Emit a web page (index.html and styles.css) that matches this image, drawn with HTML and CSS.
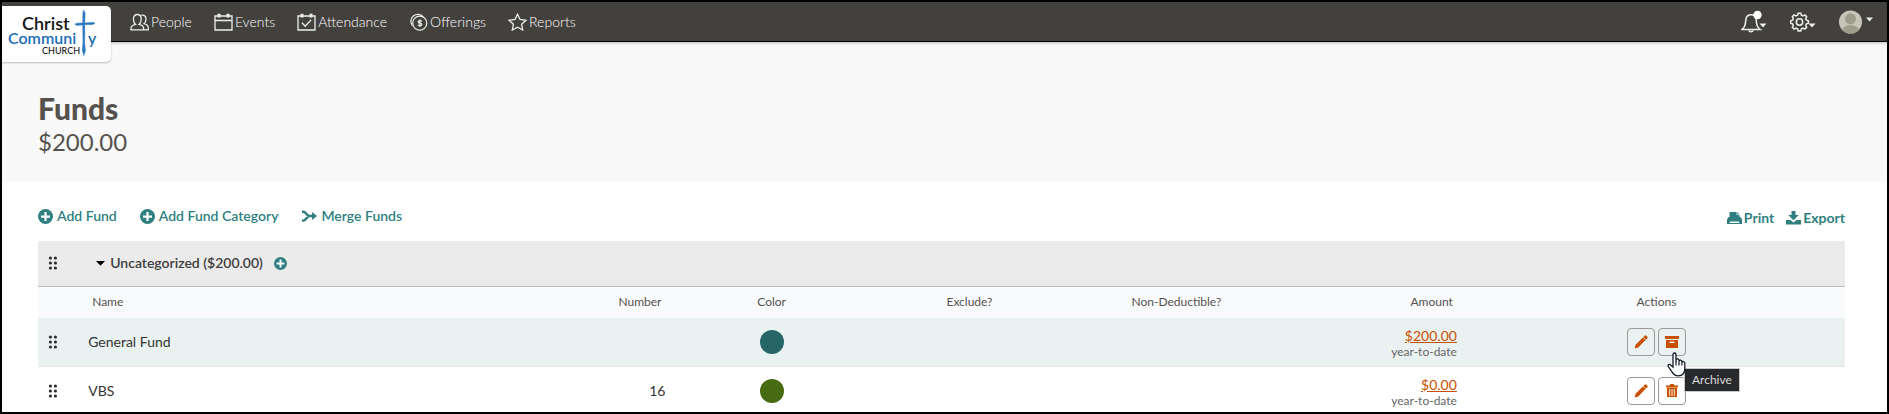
FILE: index.html
```html
<!DOCTYPE html>
<html lang="en">
<head>
<meta charset="utf-8">
<title>Funds</title>
<link rel="stylesheet" href="styles.css">
</head>
<body>
<svg class="sprite" aria-hidden="true">
  <symbol id="plus" viewBox="0 0 16 16"><circle cx="8" cy="8" r="8" fill="currentColor"/><path d="M8 3.200v9.600M3.200 8h9.600" stroke="#fff" stroke-width="2.400"/></symbol>
  <symbol id="grip" viewBox="0 0 10 14"><g fill="currentColor"><circle cx="2.4" cy="2" r="1.6"/><circle cx="7.4" cy="2" r="1.6"/><circle cx="2.4" cy="7" r="1.6"/><circle cx="7.4" cy="7" r="1.6"/><circle cx="2.4" cy="12" r="1.6"/><circle cx="7.4" cy="12" r="1.6"/></g></symbol>
  <symbol id="pencil" viewBox="0 0 14 14"><path fill="currentColor" d="M.6 13.400l1-3.600L8.900 2.500l2.600 2.600-7.300 7.300zM9.300 2.100l1.300-1.300a1.300 1.300 0 0 1 1.800 0l.8.8a1.300 1.300 0 0 1 0 1.800l-1.300 1.300z"/></symbol>
</svg>

<header class="navbar">
  <a class="logo" href="#" aria-label="Christ Community Church">
    <svg width="109" height="56" viewBox="0 0 109 56">
      <text x="20" y="24" class="logo-dark">Christ</text>
      <text x="6" y="38" class="logo-blue">Communi</text>
      <text x="86" y="38" class="logo-blue">y</text>
      <text x="40" y="48" class="logo-small">CHURCH</text>
      <path d="M81.500 4l1.600 3-.4 10 8.300-.6 2 .8-2.200 1.200-8 .2-.2 18 .8 8-1.600 5-1.400-5 .6-8-.2-17.600-5.900.3-2.100-1.100 2.300-1 5.700-.1.100-9.500z" fill="#2a78bd" stroke="#2a78bd" stroke-width=".6"/>
    </svg>
  </a>
  <nav class="menu">
    <a href="#"><svg class="nav-icon" viewBox="0 0 19 18"><path d="M1 16.800v-1.300c0-2.300 2.100-3.500 4.600-4.100C4.200 10.300 3.400 8.400 3.400 6.200 3.400 3.200 5 1.500 7.300 1.500s3.900 1.700 3.900 4.700c0 2.200-.8 4.100-2.200 5.200 2.500.6 4.600 1.800 4.600 4.100v1.300zM11.300 2.400c2.600-.9 4.700.7 4.700 3.800 0 1.900-.8 3.600-2 4.500 2.400.6 4.200 1.900 4.200 4v2.100h-4.600"/></svg>People</a>
    <a href="#"><svg class="nav-icon" viewBox="0 0 19 18"><path d="M1 3h17v14H1zM1 7.500h17"/><path d="M5 .8v3.700M14 .8v3.700" stroke-width="3"/></svg>Events</a>
    <a href="#"><svg class="nav-icon" viewBox="0 0 19 18"><path d="M1 3h17v14H1zM5 9.800l3.200 3.400 6-6.400"/><path d="M5 .8v3.700M14 .8v3.700" stroke-width="3"/></svg>Attendance</a>
    <a href="#"><svg class="nav-icon" viewBox="0 0 19 19"><path d="M3 13.200A7.200 7.200 0 1 1 14.600 4.200"/><circle cx="10.800" cy="10.700" r="7.400"/><path d="M13 8.900c-.6-1.100-3.900-1.200-3.900.5 0 1.900 3.900.8 3.900 2.700 0 1.700-3.300 1.600-4.100.3M11 6.800v8"/></svg>Offerings</a>
    <a href="#"><svg class="nav-icon" viewBox="0 0 19 18"><path d="M9.500 1.200l2.500 5.300 6 .8-4.400 4 1.100 5.700-5.200-2.800L4.300 17l1.100-5.700L1 7.300l6-.8z"/></svg>Reports</a>
  </nav>
  <div class="account">
    <button type="button" aria-label="Notifications"><svg width="26" height="24" viewBox="0 0 26 24"><g class="line"><path d="M.8 19.500c3.400-2.500 3.600-5 4-9.500.3-3.500 2.500-5.300 5.200-5.300s4.900 1.800 5.200 5.300c.4 4.500.6 7 4 9.500z"/><path d="M7.800 20.500c.5 1.500 3.900 1.500 4.400 0"/></g><path d="M18.500 13.500h7l-3.500 4z" fill="#eee"/><circle cx="16.500" cy="5" r="4.200" fill="#fff"/></svg></button>
    <button type="button" aria-label="Settings"><svg width="26" height="24" viewBox="0 0 26 24"><g class="line"><circle cx="9.500" cy="12" r="3.200"/><path d="M8.200 3.200h2.600l.6 2 1.600.7 1.900-1 1.800 1.800-1 1.900.7 1.600 2 .6v2.500l-2 .6-.7 1.600 1 1.900-1.800 1.800-1.900-1-1.600.7-.6 2H8.200l-.6-2-1.600-.7-1.900 1-1.800-1.800 1-1.900-.7-1.600-2-.6v-2.500l2-.6.7-1.600-1-1.900 1.800-1.800 1.900 1 1.600-.7z"/></g><path d="M18.500 13.500h7l-3.500 4z" fill="#eee"/></svg></button>
    <button type="button" aria-label="Account"><svg width="34" height="24" viewBox="0 0 34 24"><defs><clipPath id="face"><circle cx="11.500" cy="12" r="11.500"/></clipPath></defs><g clip-path="url(#face)"><path d="M0 0h23v24H0z" fill="#c5c6b7"/><circle cx="11.500" cy="8.800" r="5.500" fill="#9c9e8b"/><path d="M2 24c0-12 19-12 19 0z" fill="#9c9e8b"/></g><path d="M27 7.500h7l-3.500 4z" fill="#eee"/></svg></button>
  </div>
</header>

<main>
  <section class="heading">
    <h1>Funds</h1>
    <p>$200.00</p>
  </section>

  <section class="content">
    <div class="toolbar">
      <div class="tools">
        <a href="#"><svg width="15" height="15"><use href="#plus"/></svg>Add Fund</a>
        <a href="#"><svg width="15" height="15"><use href="#plus"/></svg>Add Fund Category</a>
        <a href="#"><svg width="16" height="15" viewBox="0 0 16 15"><path d="M1 2.800h1.500c2.500 0 3 4.200 6 4.200h4M1 11.600h1.500c2.500 0 3-4.600 6-4.600" fill="none" stroke="currentColor" stroke-width="2.400"/><path d="M11 3l5 4-5 4z" fill="currentColor"/></svg>Merge Funds</a>
      </div>
      <div class="tools outputs">
        <a href="#"><svg width="15" height="14" viewBox="0 0 15 14"><path d="M2.500 1h7.500l2.500 2.500V7H2.500zM1.500 6h12L15 8.500V13H0V8.500z" fill="currentColor"/><path d="M3.200 10.500h8.600l.7 1.500H2.500z" fill="#fff"/><path d="M9.800 1v2.700h2.700" fill="none" stroke="#fff" stroke-width=".7"/></svg>Print</a>
        <a href="#"><svg width="15" height="14" viewBox="0 0 15 14"><path d="M5.500 0h4v4h3.300L7.500 9.300 2.200 4h3.300zM0 9h4.500l3 2.500 3-2.500H15v4.500H0z" fill="currentColor"/></svg>Export</a>
      </div>
    </div>

    <table class="funds">
      <colgroup><col class="c-grip"><col class="c-name"><col class="c-number"><col class="c-color"><col class="c-exclude"><col class="c-deduct"><col class="c-amount"><col class="c-actions"></colgroup>
      <tbody>
        <tr class="category">
          <td class="grip"><svg width="10" height="14"><use href="#grip"/></svg></td>
          <td colspan="7"><div class="category-title"><button type="button" class="plain"><svg width="9" height="5" viewBox="0 0 9 5"><path d="M0 0h9L4.500 4.800z" fill="#000"/></svg>Uncategorized ($200.00)</button><a href="#" aria-label="Add fund"><svg width="13" height="13"><use href="#plus"/></svg></a></div></td>
        </tr>
        <tr class="labels">
          <th></th><th class="name">Name</th><th class="number">Number</th><th>Color</th><th>Exclude?</th><th>Non-Deductible?</th><th class="amount">Amount</th><th class="actions">Actions</th>
        </tr>
        <tr class="fund active">
          <td class="grip"><svg width="10" height="14"><use href="#grip"/></svg></td>
          <td class="name">General Fund</td><td class="number"></td>
          <td><span class="swatch teal"></span></td><td></td><td></td>
          <td class="amount"><a href="#">$200.00</a><small>year-to-date</small></td>
          <td class="actions"><div class="buttons">
            <button type="button" aria-label="Edit"><svg width="14" height="14"><use href="#pencil"/></svg></button>
            <span class="tip-anchor"><button type="button" aria-label="Archive"><svg width="14" height="12" viewBox="0 0 14 12"><path d="M0 0h14v3H0zM1 4h12v8H1z" fill="currentColor"/><path d="M4.500 6.300h5" stroke="#fff" stroke-width="1.400"/></svg></button>
              <svg class="pointer" width="19" height="25" viewBox="0 0 19 25"><path d="M6 15V2.800C6 .4 9 .4 9 2.800V9.500 8c.3-1.500 2.700-1.400 3 .2V9c.4-1.300 2.600-1.100 2.900.3v.8c.5-1 2.700-.8 2.900.8v5.600c0 4.500-2.500 7.300-6.300 7.300-3.500 0-5-1.300-6.700-4.200L1.300 14.500c-.8-1.700 1-2.700 2.300-1.600z" fill="#fff" stroke="#111827" stroke-width="1.300"/><path d="M9 9v4.500M12 9v4.500M14.900 10v3.500" stroke="#111827" stroke-width="1.200"/></svg>
              <span class="tooltip" role="tooltip">Archive</span></span>
          </div></td>
        </tr>
        <tr class="fund">
          <td class="grip"><svg width="10" height="14"><use href="#grip"/></svg></td>
          <td class="name">VBS</td><td class="number">16</td>
          <td><span class="swatch green"></span></td><td></td><td></td>
          <td class="amount"><a href="#">$0.00</a><small>year-to-date</small></td>
          <td class="actions"><div class="buttons">
            <button type="button" aria-label="Edit"><svg width="14" height="14"><use href="#pencil"/></svg></button>
            <button type="button" aria-label="Delete"><svg width="12" height="13" viewBox="0 0 12 13"><path d="M0 1.500h3.500L4.500 0h3l1 1.500H12v2H0zM1 4h10v9H1z" fill="currentColor"/><path d="M3.700 5v7M6 5v7M8.300 5v7" stroke="#fff" stroke-width=".9"/></svg></button>
          </div></td>
        </tr>
      </tbody>
    </table>
  </section>
</main>
</body>
</html>
```
FILE: styles.css
```css
* { box-sizing: border-box; }

body {
  margin: 0;
  height: 100vh;
  overflow: hidden;
  border: 2px solid #000;
  background: #fff;
  color: #333;
  font: 14px/20px Lato, "Open Sans", sans-serif;
}

a { color: inherit; text-decoration: none; }
button { font: inherit; color: inherit; background: none; border: 0; padding: 0; }
svg { display: block; flex: none; }
.sprite { position: absolute; width: 0; height: 0; }

.navbar {
  position: relative;
  display: flex;
  justify-content: space-between;
  align-items: center;
  height: 40px;
  padding: 0 14px 0 128px;
  background: #43413e;
  border-bottom: 1px solid #000;
  box-shadow: 0 1px 3px rgba(0, 0, 0, .25);
  color: #fff;
}
.logo {
  position: absolute;
  left: 0;
  top: 4px;
  background: #fff;
  border-radius: 0 5px 5px 0;
  box-shadow: 0 1px 2px rgba(0, 0, 0, .25);
}
.logo text { font-family: Lato, sans-serif; font-weight: 600; font-size: 18px; }
.logo .logo-dark { fill: #151515; }
.logo .logo-blue { fill: #1b6cb5; font-size: 16px; }
.logo .logo-small { fill: #151515; font-size: 9px; font-weight: 500; }

.menu { display: flex; gap: 22px; }
.menu a { display: flex; align-items: center; gap: 2px; font-weight: 300; }
.nav-icon { width: 19px; height: 18px; fill: none; stroke: #eee; stroke-width: 1.3; }
.line { fill: none; stroke: #eee; stroke-width: 1.5; }
.account { display: flex; align-items: center; gap: 23px; }

.heading {
  padding: 48px 36px 24px;
  background: #f9f9f9;
  color: #55524e;
}
.heading h1 { margin: 0; font-size: 30px; line-height: 36px; font-weight: 900; }
.heading p { margin: 0; font-size: 24px; line-height: 32px; }

.content { padding: 0 42px 0 36px; }
.toolbar {
  display: flex;
  justify-content: space-between;
  padding: 24px 0 13px;
  color: #2f7f80;
  font-weight: 600;
}
.tools { display: flex; gap: 23px; }
.tools a { display: flex; align-items: center; gap: 4px; height: 20px; }
.outputs { gap: 12px; padding-top: 2px; font-weight: 700; }
.outputs a { gap: 2px; }

.funds { width: 100%; table-layout: fixed; border-collapse: collapse; }
.c-grip { width: 2.5%; }
.c-name { width: 26.4%; }
.c-number { width: 6.1%; }
.c-color { width: 11.2%; }
.c-exclude { width: 10.7%; }
.c-deduct { width: 12.2%; }
.c-amount { width: 9.7%; }
.c-actions { width: 21.2%; }

.funds td, .funds th { padding: 0; text-align: center; font-weight: 400; }
.funds .grip { padding-left: 10px; color: #2b2d31; }
.funds .name { padding-left: 5px; text-align: left; }
.funds .number, .funds .amount { padding-right: 5px; text-align: right; }
.funds .actions { padding-left: 6px; }

.category { height: 45px; background: #ebebeb; border-bottom: 1px solid #bdbdbd; }
.category-title { display: flex; align-items: center; gap: 11px; padding-left: 13px; color: #2f7f80; }
.plain { display: flex; align-items: center; gap: 5px; color: #3e3e3e; font-weight: 600; }

.labels { height: 32px; background: #f9fafc; color: #55524e; font-size: 12px; }
.funds .labels .name { padding-left: 9px; }
.funds .labels .number, .funds .labels .amount { padding-right: 9px; }

.fund { height: 49px; background: #fff; box-shadow: inset 0 -1px #e7e9e9; }
.fund.active { background: #e9f2f1; }
.funds .fund td { padding-bottom: 2px; }
.swatch { display: block; width: 24px; height: 24px; margin: auto; border-radius: 50%; }
.teal { background: #266667; }
.green { background: #466b10; }
.amount a { display: block; padding-top: 2px; color: #c94f00; text-decoration: underline; line-height: 18px; }
.amount small { display: block; color: #666; font-size: 12px; line-height: 14px; }

.buttons { display: flex; justify-content: center; gap: 3px; }
.buttons button {
  display: grid;
  place-items: center;
  width: 28px;
  height: 28px;
  border: 1px solid #999;
  border-radius: 4px;
  background: transparent;
  color: #c94f00;
}
.tip-anchor { position: relative; }
.pointer { position: absolute; z-index: 2; left: 9px; top: 24px; }
.tooltip {
  position: absolute;
  z-index: 1;
  left: 26px;
  top: 40px;
  padding: 0 7px;
  border: 1px solid #c8c8c8;
  background: #27292d;
  color: #ddd;
  font-size: 12px;
  line-height: 22px;
}
```
